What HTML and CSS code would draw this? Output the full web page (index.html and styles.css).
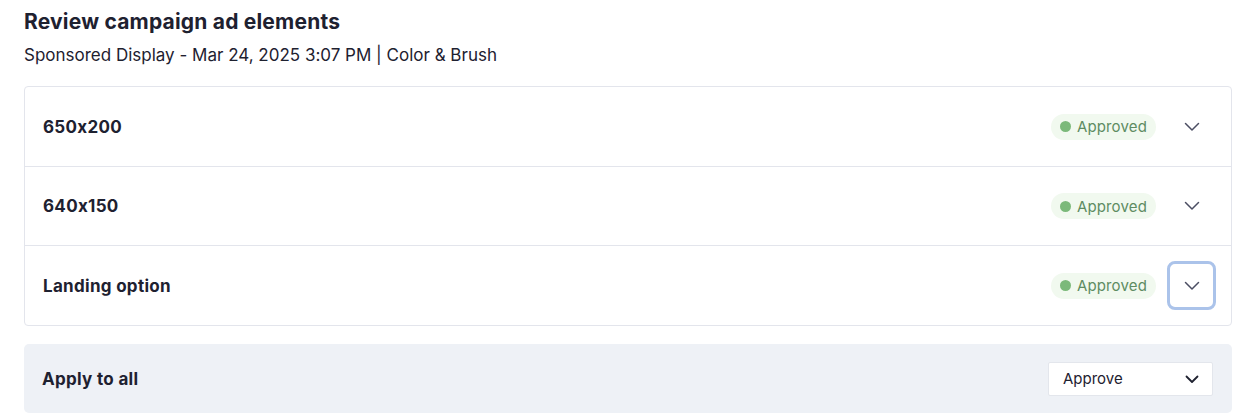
FILE: index.html
```html
<!DOCTYPE html>
<html>
<head>
<meta charset="utf-8">
<link rel="stylesheet" href="styles.css">
</head>
<body>
<div class="page">
  <h1 class="title">Review campaign ad elements</h1>
  <p class="subtitle">Sponsored Display - Mar 24, 2025 3:07 PM | Color &amp; Brush</p>
  <div class="card">
    <div class="row">
      <span class="row-label">650x200</span>
      <div class="row-actions">
        <span class="badge"><span class="dot"></span>Approved</span>
        <button class="toggle"><svg width="16" height="16" viewBox="0 0 16 16"><path d="M1.5 4.5 L8 11 L14.5 4.5" fill="none" stroke="#4b4e63" stroke-width="1.5" stroke-linecap="round" stroke-linejoin="round"/></svg></button>
      </div>
    </div>
    <div class="row">
      <span class="row-label">640x150</span>
      <div class="row-actions">
        <span class="badge"><span class="dot"></span>Approved</span>
        <button class="toggle"><svg width="16" height="16" viewBox="0 0 16 16"><path d="M1.5 4.5 L8 11 L14.5 4.5" fill="none" stroke="#4b4e63" stroke-width="1.5" stroke-linecap="round" stroke-linejoin="round"/></svg></button>
      </div>
    </div>
    <div class="row">
      <span class="row-label">Landing option</span>
      <div class="row-actions">
        <span class="badge"><span class="dot"></span>Approved</span>
        <button class="toggle focused"><svg width="16" height="16" viewBox="0 0 16 16"><path d="M1.5 4.5 L8 11 L14.5 4.5" fill="none" stroke="#4b4e63" stroke-width="1.5" stroke-linecap="round" stroke-linejoin="round"/></svg></button>
      </div>
    </div>
  </div>
  <div class="apply">
    <span class="apply-label">Apply to all</span>
    <div class="select">
      <span>Approve</span>
      <svg width="14" height="14" viewBox="0 0 14 14"><path d="M1.5 4.5 L7 10 L12.5 4.5" fill="none" stroke="#1f2230" stroke-width="1.8" stroke-linecap="round" stroke-linejoin="round"/></svg>
    </div>
  </div>
</div>
</body>
</html>
```

FILE: styles.css
```css
* { box-sizing: border-box; }
html, body { margin: 0; padding: 0; background: #fff; }
body {
  font-family: Inter, "Noto Sans", "Liberation Sans", sans-serif;
  font-feature-settings: "calt" 0;
  color: #1e2130;
}
.page {
  padding: 8px 23px 0 24px;
}
.title {
  margin: 0;
  font-size: 21px;
  font-weight: 700;
  line-height: 28px;
  letter-spacing: 0.2px;
  color: #1e2130;
}
.subtitle {
  margin: 8px 0 0;
  font-size: 17px;
  line-height: 22px;
  color: #1e2130;
}
.card {
  margin-top: 20px;
  border: 1px solid #e3e5ec;
  border-radius: 4px;
}
.row {
  display: flex;
  align-items: center;
  justify-content: space-between;
  height: 80px;
  padding: 0 15px 0 18px;
  border-bottom: 1px solid #e3e5ec;
}
.row:nth-child(2) { height: 79px; }
.row:last-child { border-bottom: none; height: 79px; }
.row-label {
  font-size: 17px;
  font-weight: 700;
  letter-spacing: 0.3px;
  color: #1e2130;
}
.row-actions {
  display: flex;
  align-items: center;
  gap: 11px;
}
.badge {
  display: inline-flex;
  align-items: center;
  gap: 6px;
  height: 26px;
  padding: 0 9px 0 9px;
  border-radius: 13px;
  background: #f1f9ef;
  color: #5e8c62;
  font-size: 15px;
  letter-spacing: 0.15px;
}
.dot {
  width: 11px;
  height: 11px;
  border-radius: 50%;
  background: #7bb97a;
}
.toggle {
  width: 49px;
  height: 49px;
  display: flex;
  align-items: center;
  justify-content: center;
  border: 3px solid transparent;
  border-radius: 8px;
  background: transparent;
  padding: 0;
}
.toggle.focused {
  border-color: #abc3ea;
}
.apply {
  margin-top: 18px;
  height: 69px;
  background: #eef1f6;
  border-radius: 5px;
  display: flex;
  align-items: center;
  justify-content: space-between;
  padding: 0 19px 0 18px;
}
.apply-label {
  font-size: 17px;
  font-weight: 700;
  letter-spacing: 0.3px;
  color: #1e2130;
}
.select {
  width: 165px;
  height: 34px;
  background: #fff;
  border: 1px solid #e3e6ec;
  border-radius: 2px;
  display: flex;
  align-items: center;
  justify-content: space-between;
  padding: 0 13px 0 14px;
  font-size: 15px;
  color: #1e2130;
}
```
